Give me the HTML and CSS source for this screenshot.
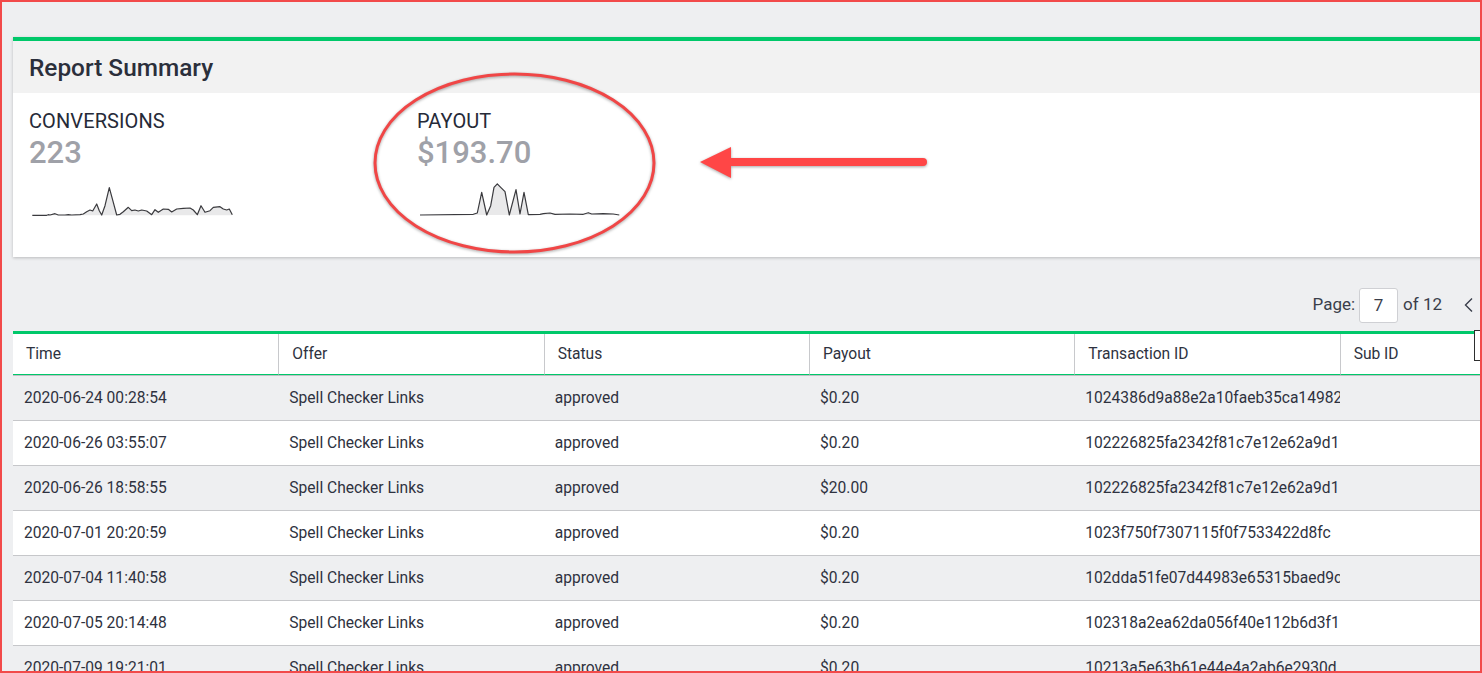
FILE: index.html
```html
<!DOCTYPE html>
<html lang="en">
<head>
<meta charset="utf-8">
<title>Report Summary</title>
<link rel="stylesheet" href="styles.css">
</head>
<body>
<div class="frame">
  <div class="content">
    <section class="card">
      <header class="card-head"><h2 class="card-title">Report Summary</h2></header>
      <div class="card-body">
        <div class="metric">
          <div class="metric-label">CONVERSIONS</div>
          <div class="metric-value">223</div>
          <svg class="spark" width="202" height="36" viewBox="0 0 202 36">
            <polygon class="spark-fill" points="0.3,32.3 14.7,32.3 16.3,31.7 18,32 23,30.7 26.3,32 33,32 36.3,31.7 39.7,32 48,31.7 51.3,31 54.7,28.7 58,27 60.7,28 64.7,21 67.3,27.7 69.7,32 73,22.7 77.3,4.7 81.3,19.3 84.7,32 88,31.3 91.3,28.7 96.3,24.3 99.7,27.7 103,27 106.3,28 109.7,27 114.7,28 119.7,31.7 123,26.7 126.3,29.3 131.3,26 136.3,26.3 139.7,29 144.7,26 151.3,25.3 158,25 161.3,27 165.3,31.7 169,22.7 173,29.3 178,27.7 181.3,24.3 188,23.7 191.3,26 194.7,27 197.3,26 200.3,31.7 200.3,32.3"/>
            <polyline class="spark-line" points="0.3,32.3 14.7,32.3 16.3,31.7 18,32 23,30.7 26.3,32 33,32 36.3,31.7 39.7,32 48,31.7 51.3,31 54.7,28.7 58,27 60.7,28 64.7,21 67.3,27.7 69.7,32 73,22.7 77.3,4.7 81.3,19.3 84.7,32 88,31.3 91.3,28.7 96.3,24.3 99.7,27.7 103,27 106.3,28 109.7,27 114.7,28 119.7,31.7 123,26.7 126.3,29.3 131.3,26 136.3,26.3 139.7,29 144.7,26 151.3,25.3 158,25 161.3,27 165.3,31.7 169,22.7 173,29.3 178,27.7 181.3,24.3 188,23.7 191.3,26 194.7,27 197.3,26 200.3,31.7"/>
          </svg>
        </div>
        <div class="metric">
          <div class="metric-label">PAYOUT</div>
          <div class="metric-value">$193.70</div>
          <svg class="spark" width="202" height="36" viewBox="0 0 202 36">
            <polygon class="spark-fill" points="0,32 53.3,31.3 57.3,30 61.7,9.3 66.7,32 70.7,22.7 74,4.3 77.3,0.8 80.7,4.3 85,8.7 89.3,32 96,6.7 100,31 104,9.3 108.3,31.7 120,31.3 123.3,30.7 130,30 135,31.3 150,31 163.3,31.3 168.3,29.7 171.7,31 183.3,30.7 193.3,31 199.3,32"/>
            <polyline class="spark-line" points="0,32 53.3,31.3 57.3,30 61.7,9.3 66.7,32 70.7,22.7 74,4.3 77.3,0.8 80.7,4.3 85,8.7 89.3,32 96,6.7 100,31 104,9.3 108.3,31.7 120,31.3 123.3,30.7 130,30 135,31.3 150,31 163.3,31.3 168.3,29.7 171.7,31 183.3,30.7 193.3,31 199.3,32"/>
          </svg>
        </div>
      </div>
    </section>

    <div class="pager">
      <span class="pager-text">Page:</span>
      <span class="pager-input">7</span>
      <span class="pager-text">of 12</span>
      <svg class="pager-prev" width="10" height="16" viewBox="0 0 10 16"><polyline points="8,1.5 1.5,8 8,14.5"/></svg>
    </div>

    <table class="grid">
      <colgroup>
        <col class="c"><col class="c"><col class="c"><col class="c"><col class="c"><col class="c">
      </colgroup>
      <thead>
        <tr><th>Time</th><th>Offer</th><th>Status</th><th>Payout</th><th>Transaction ID</th><th>Sub ID</th></tr>
      </thead>
      <tbody>
        <tr><td>2020-06-24 00:28:54</td><td>Spell Checker Links</td><td>approved</td><td>$0.20</td><td>1024386d9a88e2a10faeb35ca14982</td><td></td></tr>
        <tr><td>2020-06-26 03:55:07</td><td>Spell Checker Links</td><td>approved</td><td>$0.20</td><td>102226825fa2342f81c7e12e62a9d1</td><td></td></tr>
        <tr><td>2020-06-26 18:58:55</td><td>Spell Checker Links</td><td>approved</td><td>$20.00</td><td>102226825fa2342f81c7e12e62a9d1</td><td></td></tr>
        <tr><td>2020-07-01 20:20:59</td><td>Spell Checker Links</td><td>approved</td><td>$0.20</td><td>1023f750f7307115f0f7533422d8fc</td><td></td></tr>
        <tr><td>2020-07-04 11:40:58</td><td>Spell Checker Links</td><td>approved</td><td>$0.20</td><td>102dda51fe07d44983e65315baed9c</td><td></td></tr>
        <tr><td>2020-07-05 20:14:48</td><td>Spell Checker Links</td><td>approved</td><td>$0.20</td><td>102318a2ea62da056f40e112b6d3f1</td><td></td></tr>
        <tr><td>2020-07-09 19:21:01</td><td>Spell Checker Links</td><td>approved</td><td>$0.20</td><td>10213a5e63b61e44e4a2ab6e2930d</td><td></td></tr>
      </tbody>
    </table>
  </div>

  <div class="col-toggle"></div>

  <svg class="annotation" width="1482" height="673" viewBox="0 0 1482 673">
    <ellipse class="ring" cx="514.5" cy="163" rx="139.5" ry="89"/>
    <line class="arrow-shaft" x1="923" y1="162" x2="726" y2="162"/>
    <polygon class="arrow-head" points="700,162 731,147 731,178"/>
  </svg>
</div>
</body>
</html>
```

FILE: styles.css
```css
* { box-sizing: border-box; }

html, body {
  margin: 0;
  padding: 0;
}

body {
  font-family: Roboto, "Liberation Sans", Arial, sans-serif;
  color: #2e3240;
  background: #eeeff1;
}

.frame {
  position: relative;
  width: 1482px;
  height: 673px;
  border: 2px solid #f24a4a;
  background: #eeeff1;
  overflow: hidden;
}

.content {
  padding: 35px 0 0 11px;
}

/* Summary card */
.card {
  width: 1600px;
  border-top: 4px solid #00c86a;
  box-shadow: 0 1px 3px rgba(0, 0, 0, 0.22);
  margin-bottom: 31px;
}

.card-head {
  height: 52px;
  background: #f2f2f2;
  display: flex;
  align-items: center;
  padding: 0 0 0 16px;
}

.card-title {
  margin: 0;
  font-size: 24.4px;
  font-weight: 500;
  color: #2b2f3b;
}

.card-body {
  height: 164px;
  background: #ffffff;
  display: flex;
  padding: 17px 0 0 16px;
}

.metric {
  width: 388px;
  display: flex;
  flex-direction: column;
  align-items: flex-start;
}

.metric-label {
  font-size: 20px;
  line-height: 23px;
  font-weight: 400;
  color: #262a38;
  letter-spacing: 0.1px;
}

.metric-value {
  margin-top: 2px;
  font-size: 31px;
  line-height: 36px;
  font-weight: 500;
  color: #9fa1a8;
}

.spark {
  display: block;
  margin-top: 12px;
  margin-left: 3px;
  overflow: visible;
}

.spark-fill {
  fill: #e9e9ea;
  stroke: none;
}

.spark-line {
  fill: none;
  stroke: #3a3a3e;
  stroke-width: 1.2;
  stroke-linejoin: round;
}

/* Pager */
.pager {
  height: 35px;
  display: flex;
  justify-content: flex-end;
  align-items: center;
  gap: 4px;
  padding-right: 6px;
  margin-bottom: 8px;
}

.pager-text {
  font-size: 17px;
  color: #3a3e4a;
  padding-bottom: 3px;
}

.pager-input {
  width: 39px;
  height: 35px;
  border: 1px solid #cfd0d4;
  border-radius: 3px;
  background: #ffffff;
  display: flex;
  align-items: center;
  justify-content: center;
  font-size: 17px;
  color: #3a3e4a;
  padding-bottom: 1px;
}

.pager-input + .pager-text {
  margin-left: 1px;
}

.pager-prev {
  margin-left: 18px;
  margin-bottom: 2px;
}

.pager-prev polyline {
  fill: none;
  stroke: #3a3e4a;
  stroke-width: 1.4;
}

/* Grid */
.grid {
  width: 1592px;
  table-layout: fixed;
  border-collapse: separate;
  border-spacing: 0;
  border-top: 3px solid #00c86a;
  font-size: 15.6px;
}

.grid th {
  height: 41px;
  background: #ffffff;
  font-weight: 400;
  text-align: left;
  padding: 0 0 0 13px;
  color: #2e3240;
  border-bottom: 1px solid #00c86a;
  border-left: 1px solid #c8c9cc;
}

.grid th:first-child {
  border-left: none;
}

.grid td {
  height: 45px;
  padding: 0 0 0 11px;
  white-space: nowrap;
  overflow: hidden;
  color: #2e3240;
  border-bottom: 1px solid #c6c7ca;
}

.grid tbody tr:first-child td {
  height: 46px;
  border-top: 1px solid #bfc0c3;
}

.grid tbody tr:nth-child(odd) td {
  background: #eeeff1;
}

.grid tbody tr:nth-child(even) td {
  background: #ffffff;
}

/* overlay button at the right edge of the grid header */
.col-toggle {
  position: absolute;
  left: 1472px;
  top: 328px;
  width: 20px;
  height: 31px;
  background: #ffffff;
  border: 1px solid #2e2e2e;
}

/* Red annotation overlay */
.annotation {
  position: absolute;
  left: -2px;
  top: -2px;
  pointer-events: none;
  filter: drop-shadow(0 1px 1.5px rgba(0, 0, 0, 0.35));
}

.ring {
  fill: none;
  stroke: #f04646;
  stroke-width: 3;
}

.arrow-shaft {
  stroke: #ff4646;
  stroke-width: 8;
  stroke-linecap: round;
}

.arrow-head {
  fill: #ff4646;
}
```
